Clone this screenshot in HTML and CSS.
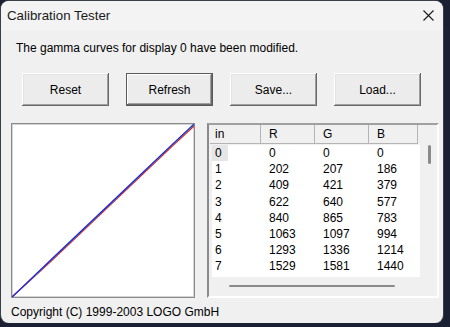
FILE: index.html
```html
<!DOCTYPE html>
<html lang="en">
<head>
  <meta charset="UTF-8" />
  <title>Calibration Tester</title>
  <link rel="stylesheet" href="styles.css">
</head>
<body>
  <div class="window">
    <div class="titlebar">
      <span class="title">Calibration Tester</span>
      <svg class="close" width="11" height="11" viewBox="0 0 11 11">
        <path d="M0.5 0.5 L10.5 10.5 M10.5 0.5 L0.5 10.5" stroke="#1a1a1a" stroke-width="1.1" fill="none"/>
      </svg>
    </div>

    <p class="message">The gamma curves for display 0 have been modified.</p>

    <div class="buttons">
      <button class="btn">Reset</button>
      <button class="btn btn-default">Refresh</button>
      <button class="btn">Save...</button>
      <button class="btn">Load...</button>
    </div>

    <div class="panels">
      <div class="graph">
        <svg viewBox="0 0 182 173" preserveAspectRatio="none">
          <polyline points="0,173 40,136.2 80,98.2 120,60.3 160,22.3 182,2" stroke="#f02030" stroke-width="1.4" fill="none"/>
          <polyline points="0,173.5 40,135.6 80,97.6 120,59.5 160,21.4 182,1" stroke="#20b050" stroke-width="1" fill="none"/>
          <polyline points="0,173 40,134.8 80,96.8 120,58.7 160,20.6 182,0" stroke="#2020f0" stroke-width="1.2" fill="none"/>
        </svg>
      </div>

      <div class="table-box">
        <div class="list">
          <div class="header">
            <div class="cell">in</div>
            <div class="cell">R</div>
            <div class="cell">G</div>
            <div class="cell">B</div>
          </div>
          <div class="rows" id="rows"></div>
          <div class="vscroll"><div class="vthumb"></div></div>
        </div>
        <div class="hscroll"><div class="hthumb"></div></div>
      </div>
    </div>

    <p class="copyright">Copyright (C) 1999-2003 LOGO GmbH</p>
  </div>

  <script>
    const data = [
      [0, 0, 0, 0],
      [1, 202, 207, 186],
      [2, 409, 421, 379],
      [3, 622, 640, 577],
      [4, 840, 865, 783],
      [5, 1063, 1097, 994],
      [6, 1293, 1336, 1214],
      [7, 1529, 1581, 1440]
    ];

    const container = document.getElementById("rows");
    data.forEach((row, i) => {
      const item = document.createElement("div");
      item.className = "row";
      item.innerHTML = row.map((v, j) =>
        (i === 0 && j === 0)
          ? `<div class="cell"><span class="sel">${v}</span></div>`
          : `<div class="cell">${v}</div>`
      ).join("");
      container.appendChild(item);
    });
  </script>
</body>
</html>
```

FILE: styles.css
```css
body {
  margin: 0;
  background: #1b2132;
  font-family: "Liberation Sans", Arial, sans-serif;
  font-size: 12px;
  color: #000;
}

.window {
  margin: 1px 0 0 1px;
  width: 442px;
  height: 322px;
  background: #f0f0f0;
  border-radius: 8px;
  overflow: hidden;
  box-shadow: 0 0 0 1px #3a3f4a;
}

.titlebar {
  height: 29px;
  display: flex;
  align-items: center;
  justify-content: space-between;
  padding: 0 9px 0 6px;
  background: #f3f3f3;
}

.title {
  font-size: 13.3px;
  color: #1a1a1a;
}

.message {
  margin: 11px 0 0 15px;
  line-height: 14px;
}

.buttons {
  display: flex;
  gap: 17px;
  margin: 18px 0 0 21px;
}

.btn {
  width: 87px;
  height: 33px;
  border: none;
  padding: 0;
  background: #ececec;
  font-family: inherit;
  font-size: 12px;
  color: #000;
  box-shadow: inset -1px -1px #696969, inset 1px 1px #ffffff,
              inset -2px -2px #a0a0a0, inset 2px 2px #e3e3e3;
}

.btn-default {
  box-shadow: inset 0 0 0 1px #5a5a5a, inset -2px -2px #696969,
              inset 2px 2px #ffffff, inset -3px -3px #a0a0a0;
}

.panels {
  display: flex;
  gap: 12px;
  margin: 17px 0 0 10px;
  height: 175px;
}

.graph {
  width: 184px;
  box-sizing: border-box;
  border: 1px solid #8a8a8a;
  box-shadow: inset 0 0 0 1px #d4d4d4;
  background: #fff;
}

.graph svg {
  display: block;
  width: 100%;
  height: 100%;
}

.table-box {
  width: 232px;
  box-sizing: border-box;
  border: 2px solid;
  border-color: #a0a0a0 #ffffff #ffffff #8a8a8a;
  padding-left: 1px;
}

.list {
  display: grid;
  grid-template-columns: 210px 17px;
  grid-template-rows: 20px 132px;
}

.header, .row {
  display: grid;
  grid-template-columns: 51px 54px 54px 49px;
}

.header {
  grid-column: 1;
  grid-row: 1;
  height: 19px;
  line-height: 18px;
}

.header .cell {
  box-shadow: inset -1px 0 #b4b4b4, inset 0 -1px #b4b4b4;
}

.rows {
  grid-column: 1;
  grid-row: 2;
  margin-left: 2px;
  background: #fff;
}

.row {
  grid-template-columns: 49px 54px 54px 49px;
  line-height: 16.2px;
}

.cell {
  padding-left: 8px;
  white-space: nowrap;
}

.header .cell:first-child {
  padding-left: 5px;
}

.row .cell:first-child {
  padding-left: 3px;
}

.sel {
  display: inline-block;
  margin-left: -3px;
  padding-left: 3px;
  width: 13px;
  background: #e6e6e6;
}

.vscroll {
  grid-column: 2;
  grid-row: 2;
  position: relative;
}

.vthumb {
  position: absolute;
  left: 8px;
  top: 0;
  width: 3px;
  height: 19px;
  border-radius: 2px;
  background: #8a8a8a;
}

.hscroll {
  height: 19px;
  position: relative;
}

.hthumb {
  position: absolute;
  left: 19px;
  top: 8px;
  width: 166px;
  height: 2px;
  border-radius: 1px;
  background: #8a8a8a;
}

.copyright {
  margin: 7px 0 0 10px;
  line-height: 14px;
}
```
